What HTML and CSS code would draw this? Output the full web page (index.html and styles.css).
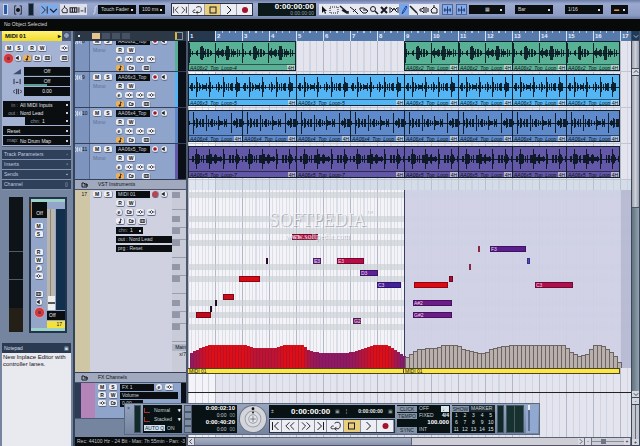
FILE: index.html
```html
<!DOCTYPE html>
<html lang="en">
<head>
    <meta charset="UTF-8">
    <meta name="viewport" content="width=device-width, initial-scale=1.0">
    <title>Project - MIDI 01</title>
    <link rel="stylesheet" href="styles.css">
</head>
<body>
    <!-- icon sprite -->
    <svg class="sprite" aria-hidden="true">
        <symbol id="i-start" viewBox="0 0 10 10"><path d="M2 1v8M8 1L4 5l4 4"/></symbol>
        <symbol id="i-end" viewBox="0 0 10 10"><path d="M8 1v8M2 1l4 4-4 4"/></symbol>
        <symbol id="i-rew" viewBox="0 0 12 10"><path d="M6 1L2 5l4 4M11 1L7 5l4 4"/></symbol>
        <symbol id="i-fwd" viewBox="0 0 12 10"><path d="M1 1l4 4-4 4M6 1l4 4-4 4"/></symbol>
        <symbol id="i-play" viewBox="0 0 10 10"><path d="M3 1l4 4-4 4"/></symbol>
        <symbol id="i-loop" viewBox="0 0 12 10"><path d="M4 8H2.500C0 8 1 5 3 5h1M5 2l2-1h2c3 0 3 6 0 7H5M7 6L5 8l2 2"/></symbol>
        <symbol id="i-stop" viewBox="0 0 10 10"><rect x="2" y="2" width="6" height="6"/></symbol>
        <symbol id="i-rec" viewBox="0 0 10 10"><circle cx="5" cy="5" r="3" fill="#a3132b" stroke="none"/></symbol>
        <symbol id="i-mon" viewBox="0 0 8 8"><path d="M1 3h1l3-2v6L2 5H1z" fill="#222" stroke="none"/></symbol>
        <symbol id="i-note" viewBox="0 0 8 8"><path d="M4 1v5M4 1l2 2"/><circle cx="3" cy="6" r="1" fill="#222"/></symbol>
        <symbol id="i-folder" viewBox="0 0 8 8"><path d="M1 6V2h2l1 1h2v3zM3 4h4"/></symbol>
        <symbol id="i-keys" viewBox="0 0 8 8"><path d="M1 2h6v4H1zM3 2v4M5 2v4"/></symbol>
        <symbol id="i-wave" viewBox="0 0 8 8"><path d="M0 4h2M6 4h2M4 2L2 4l2 2 2-2z"/></symbol>
        <symbol id="i-audio" viewBox="0 0 8 8"><path d="M0 1l2 3-2 3M3 1v6M5 2v4M7 1v6"/></symbol>
        <symbol id="i-fader" viewBox="0 0 10 8"><path d="M0 7h9V1z" fill="#3b4d70" stroke="none"/></symbol>
        <symbol id="i-pan" viewBox="0 0 10 8"><path d="M1 1v6M8 1v6M3 5h3"/></symbol>
        <symbol id="i-delay" viewBox="0 0 10 8"><path d="M2 2L0 4l2 2M8 2l2 2-2 2M4 1v6M6 1v6"/></symbol>
        <symbol id="i-bracket" viewBox="0 0 10 12"><path d="M3 1H1v10h2M7 1h2v10H7"/><circle cx="5" cy="6" r="2" fill="#111"/></symbol>
        <symbol id="i-arrow" viewBox="0 0 10 10"><path d="M3 1v7l2-2 1 3 1-1-1-2h2z" fill="#111" stroke="none"/></symbol>
        <symbol id="i-range" viewBox="0 0 10 10"><rect x="1" y="2" width="8" height="6" stroke-dasharray="1 1"/></symbol>
        <symbol id="i-split" viewBox="0 0 10 10"><path d="M1 1l7 6M3 5l5 3M7 8h2V6" stroke-width="1.500"/></symbol>
        <symbol id="i-glue" viewBox="0 0 10 10"><path d="M1 2l4 3 4 4M4 7l3-3"/></symbol>
        <symbol id="i-erase" viewBox="0 0 10 10"><path d="M1 3h4l4 3-2 2H4L1 5zM4 5h4"/></symbol>
        <symbol id="i-zoom" viewBox="0 0 10 10"><circle cx="4" cy="4" r="2.500"/><path d="M6 6l3 3" stroke-width="1.500"/></symbol>
        <symbol id="i-mute" viewBox="0 0 10 10"><path d="M2 2l6 6M8 2L2 8" stroke-width="2"/></symbol>
        <symbol id="i-warp" viewBox="0 0 10 10"><path d="M1 2v6M9 2v6M2 3l2 2 1-2 1 2 2-2M2 7l2-2M8 7L6 5" stroke-width="1"/></symbol>
        <symbol id="i-draw" viewBox="0 0 10 10"><path d="M3 9l1-3 3-5 1 1-3 5z" stroke="#1f4a9c"/></symbol>
        <symbol id="i-line" viewBox="0 0 10 10"><path d="M1 1l7 7M8 9h1" stroke-width="1.500"/></symbol>
        <symbol id="i-scrub" viewBox="0 0 10 10"><path d="M1 4h2l2-2v6L3 6H1zM7 2v6M9 3v4"/></symbol>
        <symbol id="i-color" viewBox="0 0 10 10"><path d="M2 5l3-3 3 2v4H3zM5 2V0"/></symbol>
        <symbol id="i-cross" viewBox="0 0 10 10"><path d="M1 5h8M5 1v8M2 3v4M8 3v4" stroke="#16306a"/></symbol>
        <symbol id="i-left" viewBox="0 0 8 8"><path d="M5 1L2 4l3 3"/></symbol>
        <symbol id="i-down" viewBox="0 0 8 8"><path d="M1 3l3 3 3-3"/></symbol>
        <symbol id="i-up" viewBox="0 0 8 8"><path d="M1 5l3-3 3 3"/></symbol>
    </svg>

    <div class="app">
        <header class="toolbar">
            <button class="tb-btn tb-narrow" aria-label="Project active"></button>
            <button class="tb-btn tb-plain" aria-label="Delay compensation"><svg><use href="#i-bracket"/></svg></button>
            <div class="slot"></div>
            <div class="group group-blue">
                <button aria-label="Show inspector"><svg><use href="#i-end"/></svg></button>
                <button aria-label="Show infoline"><svg><use href="#i-down"/></svg></button>
            </div>
            <div class="group group-light">
                <button aria-label="Pool"><svg><use href="#i-color"/></svg></button>
                <button aria-label="Mixer"><svg><use href="#i-keys"/></svg></button>
                <button aria-label="Markers"><svg><use href="#i-pan"/></svg></button>
            </div>
            <svg class="tb-curve"><path d="M1 9C5 9 1 1 5 1"/></svg>
            <select class="drop drop-fader" aria-label="Automation mode"><option>Touch Fader</option></select>
            <select class="drop drop-ms" aria-label="Return time"><option>100 ms</option></select>
            <div class="group group-play">
                <button class="half" aria-label="Previous"><svg><use href="#i-start"/></svg></button>
                <button class="half" aria-label="Next"><svg><use href="#i-end"/></svg></button>
                <button aria-label="Cycle"><svg><use href="#i-loop"/></svg></button>
                <button class="on" aria-label="Stop"><svg><use href="#i-stop"/></svg></button>
                <button aria-label="Play"><svg><use href="#i-play"/></svg></button>
                <button aria-label="Record"><svg><use href="#i-rec"/></svg></button>
            </div>
            <div class="clock">
                <strong>0:00:00:00</strong>
                <span>0:00:00:00</span>
            </div>
            <div class="group group-tools" id="tools"></div>
            <div class="group group-snap">
                <button aria-label="Autoscroll"><svg><use href="#i-cross"/></svg></button>
                <button aria-label="Snap"><svg><use href="#i-cross"/></svg></button>
            </div>
            <select class="drop drop-snap" aria-label="Snap mode"><option>▦</option></select>
            <select class="drop drop-grid" aria-label="Grid"><option>Bar</option></select>
            <select class="drop drop-quant" aria-label="Quantize"><option>1/16</option></select>
            <select class="drop drop-color" aria-label="Part colour"><option>▬</option></select>
        </header>

        <div class="infoline">No Object Selected</div>

        <main class="workspace">
            <aside class="inspector">
                <div class="insp-title">
                    <span class="insp-name">MIDI 01</span>
                    <button class="knob" aria-label="Inspector menu"></button>
                </div>
                <section class="insp-panel">
                    <div class="insp-buttons">
                        <button class="mini">M</button>
                        <button class="mini">S</button>
                        <button class="mini push">R</button>
                        <button class="mini">W</button>
                        <button class="mini push-end" aria-label="Input transformer"><svg><use href="#i-wave"/></svg></button>
                    </div>
                    <div class="insp-buttons tall">
                        <button class="record" aria-label="Record enable"></button>
                        <button class="mini round" aria-label="Monitor"><svg><use href="#i-mon"/></svg></button>
                        <button class="mini orange" aria-label="Timebase"><svg><use href="#i-note"/></svg></button>
                        <button class="mini" aria-label="Lanes"><svg><use href="#i-folder"/></svg></button>
                        <button class="mini" aria-label="Keys"><svg><use href="#i-keys"/></svg></button>
                        <button class="mini push-end" aria-label="Edit in place"><svg><use href="#i-keys"/></svg></button>
                    </div>
                    <div class="insp-value"><svg><use href="#i-fader"/></svg><output class="v1">Off</output></div>
                    <div class="insp-value"><svg><use href="#i-pan"/></svg><output class="v2">Off</output></div>
                    <div class="insp-value"><svg><use href="#i-delay"/></svg><output>0.00</output></div>
                    <div class="insp-routing">
                        <label class="field"><span>in :</span><select><option>All MIDI Inputs</option></select></label>
                        <label class="field"><span>out :</span><select><option>Nord Lead</option></select></label>
                        <label class="field field-short"><span>chn:</span><select><option>1</option></select></label>
                    </div>
                    <label class="field"><select aria-label="Program"><option>Reset</option></select></label>
                    <label class="field"><span>map:</span><select><option>No Drum Map</option></select></label>
                </section>
                <nav class="insp-tabs">
                    <button>Track Parameters<i>◦</i></button>
                    <button>Inserts<i>▫</i></button>
                    <button>Sends<i>▪</i></button>
                    <button>Channel<i>▯</i></button>
                </nav>
                <section class="channel">
                    <div class="eq"></div>
                    <div class="strip">
                        <div class="strip-cap"></div>
                        <div class="strip-body">
                            <div class="strip-left">
                                <span class="strip-pan">Off</span>
                                <button class="mini">M</button>
                                <button class="mini">S</button>
                                <button class="mini later">R</button>
                                <button class="mini">W</button>
                                <button class="mini round">e</button>
                                <button class="mini" aria-label="Bypass inserts"><svg><use href="#i-wave"/></svg></button>
                                <button class="mini later" aria-label="Keys"><svg><use href="#i-keys"/></svg></button>
                                <button class="mini round" aria-label="Monitor"><svg><use href="#i-mon"/></svg></button>
                                <button class="record" aria-label="Record enable"></button>
                            </div>
                            <div class="strip-right">
                                <div class="fader"><span class="fader-cap"></span></div>
                                <div class="meter"></div>
                                <span class="level">Off</span>
                                <span class="number">17</span>
                            </div>
                        </div>
                        <div class="strip-cap"></div>
                    </div>
                </section>
                <label class="note-head" for="notepad">Notepad<i>▣</i></label>
                <textarea id="notepad" class="notepad">New Inplace Editor with controller lanes.</textarea>
            </aside>

            <section class="tracklist">
                <div class="list-head">
                    <span class="dot"></span>
                    <i class="chip lit"></i><i class="chip"></i><i class="chip"></i><i class="chip"></i>
                    <b></b>
                </div>
                <div id="audioTracks"></div>
                <div class="folder"><svg><use href="#i-folder"/></svg>VST Instruments</div>
                <div class="midi-track">
                    <div class="midi-num">17</div>
                    <div class="midi-body">
                        <div class="line">
                            <button class="mini">M</button>
                            <button class="mini">S</button>
                            <span class="name">MIDI 01</span>
                            <button class="mini round armed" aria-label="Record enable"></button>
                            <button class="mini round" aria-label="Monitor"><svg><use href="#i-mon"/></svg></button>
                        </div>
                        <div class="line inset">
                            <button class="mini">R</button>
                            <button class="mini">W</button>
                        </div>
                        <div class="line inset">
                            <button class="mini round">e</button>
                            <button class="mini" aria-label="Inserts"><svg><use href="#i-folder"/></svg></button>
                            <button class="mini" aria-label="Sends"><svg><use href="#i-wave"/></svg></button>
                            <button class="mini" aria-label="EQ"><svg><use href="#i-wave"/></svg></button>
                        </div>
                        <div class="line inset">
                            <button class="mini" aria-label="Timebase"><svg><use href="#i-note"/></svg></button>
                            <button class="mini" aria-label="Lanes"><svg><use href="#i-folder"/></svg></button>
                            <button class="mini" aria-label="Drums"><svg><use href="#i-keys"/></svg></button>
                        </div>
                        <label class="field inset chn"><span>chn:</span><select><option>1</option></select></label>
                        <div class="name inset wide">out : Nord Lead</div>
                        <div class="name inset wide">prg : Reset</div>
                    </div>
                    <div class="keys">
                        <div class="key-rows" id="keyRows"></div>
                        <span class="ctl">Main</span>
                        <span class="ctl">x/7</span>
                    </div>
                </div>
                <div class="folder"><svg><use href="#i-folder"/></svg>FX Channels</div>
                <div class="fx-track">
                    <div class="fx-num"></div>
                    <div class="fx-body">
                        <div class="line">
                            <button class="mini">M</button>
                            <button class="mini">S</button>
                            <span class="name">FX 1</span>
                            <button class="mini round">e</button>
                            <button class="mini" aria-label="Inserts"><svg><use href="#i-wave"/></svg></button>
                        </div>
                        <div class="line">
                            <button class="mini">R</button>
                            <button class="mini">W</button>
                            <span class="name grow">Volume</span>
                        </div>
                        <div class="line">
                            <button class="mini" aria-label="Mute automation"><svg><use href="#i-wave"/></svg></button>
                            <button class="mini" aria-label="Lanes"><svg><use href="#i-folder"/></svg></button>
                            <span class="name short">0.00</span>
                        </div>
                    </div>
                    <div class="peak"></div>
                </div>
                <div class="list-rest"></div>
                <div class="status">Rec: 44100 Hz - 24 Bit - Max: 7h 55min - Pan: -3</div>
            </section>

            <section class="arrange">
                <div class="ruler" id="ruler"></div>
                <div class="canvas">
                    <div id="lanes"></div>
                    <div class="gap"></div>
                    <div class="roll">
                        <div class="roll-rows" id="rollRows"></div>
                        <div class="shade"></div>
                        <div id="notes"></div>
                        <svg class="ramp" id="ramp" viewBox="0 0 443 24" preserveAspectRatio="xMinYMax slice"></svg>
                        <div class="watermark">
                            <span class="wm-name">SOFTPEDIA<sup>™</sup></span>
                            <span class="wm-url">www.softpedia.com</span>
                        </div>
                    </div>
                    <div class="part-names"><span>MIDI 01</span><span>MIDI 01</span></div>
                    <div class="below"></div>
                </div>
                <div class="hscroll">
                    <button aria-label="Scroll left"><svg><use href="#i-left"/></svg></button>
                    <div class="thumb"></div>
                    <div class="track-bg"></div>
                    <button aria-label="Scroll right"><svg><use href="#i-play"/></svg></button>
                    <button aria-label="Zoom out">-</button>
                    <input type="range" value="35" aria-label="Horizontal zoom">
                    <button aria-label="Zoom in">+</button>
                </div>
            </section>

            <div class="vscroll">
                <button class="corner" aria-label="Ruler format"><svg><use href="#i-down"/></svg></button>
                <div class="v-light v-top"></div>
                <button aria-label="Scroll up"><svg><use href="#i-up"/></svg></button>
                <div class="v-light v-thumb"></div>
                <div class="v-track"></div>
                <button aria-label="Scroll down"><svg><use href="#i-down"/></svg></button>
                <button aria-label="Zoom out">-</button>
                <div class="v-zoom"></div>
                <button aria-label="Zoom in">+</button>
            </div>

            <section class="transport" aria-label="Transport">
                <div class="tp-handle">×</div>
                <div class="tp-meter"></div>
                <div class="tp-modes">
                    <div><i></i>Normal<b>▾</b></div>
                    <div><i></i>Stacked<b>▾</b></div>
                    <div><button class="autoq">AUTO Q</button>ON</div>
                </div>
                <div class="tp-locators">
                    <div><i></i><strong>0:00:02:10</strong></div>
                    <div><i></i><span>0:00</span><em>00</em></div>
                    <div><i></i><strong>0:00:40:20</strong></div>
                    <div><i></i><span>0:00</span><em>00</em></div>
                </div>
                <svg class="jog" viewBox="0 0 30 30">
                    <circle cx="15" cy="15" r="15" fill="#6c7385"/>
                    <circle cx="15" cy="15" r="14" fill="#d3d5da"/>
                    <circle cx="15" cy="15" r="9" fill="#9a9fab"/>
                    <circle cx="15" cy="15" r="8" fill="#dcdde1"/>
                    <circle cx="15" cy="15" r="5" fill="#9297a4"/>
                    <circle cx="15" cy="15" r="4" fill="#e6e7ea"/>
                    <path d="M15 12v6M12 15h6" stroke="#70757f"/>
                    <circle cx="15" cy="4" r="1.500" fill="#111"/>
                    <circle cx="15" cy="8" r="1" fill="#111"/>
                </svg>
                <div class="tp-main">
                    <div class="tp-display">
                        <span class="pm">±</span>
                        <strong>0:00:00:00</strong><em>▣</em>
                        <span class="pm">¦</span>
                        <small>0:00:00:00</small><em>▣</em>
                    </div>
                    <div class="group tp-buttons">
                        <button class="half" aria-label="Go to start"><svg><use href="#i-start"/></svg></button>
                        <button aria-label="Rewind"><svg><use href="#i-rew"/></svg></button>
                        <button aria-label="Forward"><svg><use href="#i-fwd"/></svg></button>
                        <button class="half" aria-label="Go to end"><svg><use href="#i-end"/></svg></button>
                        <button aria-label="Cycle"><svg><use href="#i-loop"/></svg></button>
                        <button class="on" aria-label="Stop"><svg><use href="#i-stop"/></svg></button>
                        <button aria-label="Play"><svg><use href="#i-play"/></svg></button>
                        <button aria-label="Record"><svg><use href="#i-rec"/></svg></button>
                    </div>
                </div>
                <div class="tp-tempo">
                    <div><button>CLICK</button>OFF<em class="box">♩</em></div>
                    <div><button>TEMPO</button>FIXED<b>4/4</b></div>
                    <div><b class="bpm">100.000</b></div>
                    <div><button>SYNC</button>INT</div>
                </div>
                <div class="tp-markers">
                    <div class="mk-head"><button>SHOW</button>MARKER</div>
                    <div class="mk-grid" id="markers"></div>
                </div>
                <div class="tp-meter"></div>
                <div class="tp-meter wide"></div>
                <div class="tp-out"><span></span></div>
            </section>
        </main>
    </div>

    <script src="script.js"></script>
</body>
</html>
```

FILE: styles.css
```css
* {
    margin: 0;
    padding: 0;
    box-sizing: border-box;
}

:root {
    --bar: 27px;
    --track: 36px;
    --midi: 183px;
    --blue: #8fa4cb;
    --slate: #75849f;
    --lcd: #0b0e10;
}

body {
    font-family: "Liberation Sans", Arial, sans-serif;
    font-size: 5px;
    line-height: 7px;
    background: #75849f;
    color: #111;
    overflow: hidden;
}

button,
select,
input,
textarea {
    font: inherit;
    color: inherit;
    border: none;
    border-radius: 0;
    background: none;
    appearance: none;
}

i,
em {
    font-style: normal;
}

svg {
    fill: none;
    stroke: #1a1a22;
    stroke-width: 1;
    display: block;
}

.sprite {
    position: absolute;
    width: 0;
    height: 0;
}

.app {
    display: grid;
    grid-template-rows: 19px 12px minmax(0, 1fr);
    height: 100vh;
}

/* toolbar */
.toolbar {
    display: flex;
    align-items: center;
    padding: 0 3px;
    background: linear-gradient(#6c7ca6, #9ba9cf 20%, #8c9bc3 80%, #6b7a9f);
    overflow: hidden;
}

.toolbar > * {
    flex: none;
}

.toolbar svg {
    width: 10px;
    height: 10px;
}

.tb-btn {
    height: 11px;
}

.tb-narrow {
    width: 5px;
    background: #2b5ba2;
    border: 1px solid #c6d3ec;
}

.tb-plain {
    margin-left: 5px;
    width: 10px;
}

.slot {
    width: 6px;
    height: 13px;
    margin: 0 6px 0 5px;
    background: #13222e;
    border: 1px solid #54658a;
}

.group {
    display: flex;
}

.group button {
    display: flex;
    align-items: center;
    justify-content: center;
    height: 11px;
}

.group-blue {
    background: #7fabea;
}

.group-blue button {
    width: 9px;
}

.group-light {
    margin: 0 5px 0 2px;
    background: #dde0ea;
}

.group-light button {
    width: 9px;
}

.toolbar .tb-curve {
    width: 6px;
    stroke: #d9e0f2;
}

.drop {
    height: 9px;
    padding: 0 3px;
    background: linear-gradient(#dcdde0, #dcdde0) right 3px center / 2px 2px no-repeat var(--lcd);
    color: #d5d8dc;
}

.drop-fader {
    width: 38px;
}

.drop-ms {
    width: 26px;
    margin: 0 6px 0 3px;
}

.drop-snap {
    width: 36px;
    margin: 0 10px 0 2px;
    text-align: center;
}

.drop-grid,
.drop-quant {
    width: 38px;
    margin-right: 12px;
}

.drop-quant {
    margin-right: 8px;
}

.drop-color {
    width: 17px;
    color: #e39a4d;
}

.group-play {
    border: 1px solid #2b3040;
    background: #eceef3;
}

.group-play button {
    width: 16px;
    border-left: 1px solid #9aa0b0;
}

.group-play .half {
    width: 8px;
    border: none;
}

.group .on {
    background: #e9cf7c;
}

.clock {
    display: flex;
    flex-direction: column;
    align-items: flex-end;
    width: 58px;
    height: 13px;
    margin: 0 3px 0 5px;
    padding-right: 2px;
    background: #0b1719;
    color: #fff;
}

.clock strong {
    font-size: 8px;
    line-height: 8px;
}

.clock span {
    line-height: 5px;
    color: #8fa2a6;
}

.group-tools {
    background: #e8eaf1;
}

.group-tools button {
    width: 10px;
}

.group-tools .active {
    background: #78a6ea;
}

.group-snap {
    gap: 3px;
    margin-left: 3px;
}

.group-snap button {
    width: 11px;
    background: #86acea;
    border: 1px solid #4a679f;
}

.infoline {
    padding: 0 4px;
    line-height: 11px;
    background: #080909;
    color: #d8d8d8;
}

.workspace {
    position: relative;
    display: grid;
    grid-template-columns: 75px 111px minmax(0, 1fr) 9px;
    min-height: 0;
}

/* shared small controls */
.mini {
    display: flex;
    align-items: center;
    justify-content: center;
    flex: none;
    width: 9px;
    height: 7px;
    border-radius: 2px;
    background: #eceef3;
    border-bottom: 1px solid #5d6a86;
    border-right: 1px solid #8190ae;
    font-weight: bold;
    line-height: 6px;
}

.mini svg {
    width: 7px;
    height: 6px;
}

.round {
    width: 7px;
    border-radius: 4px;
}

.orange {
    background: #eeb053;
}

.armed {
    background: #b8454f;
}

.name {
    display: block;
    width: 34px;
    height: 7px;
    padding-left: 2px;
    background: var(--lcd);
    color: #c9d2dc;
    white-space: nowrap;
    overflow: hidden;
}

.field {
    display: flex;
    height: 8px;
    line-height: 8px;
    padding: 0 2px 0 4px;
    background: linear-gradient(#ccd, #ccd) right 2px center / 2px 2px no-repeat var(--lcd);
    color: #8d98a6;
}

.field span {
    flex: none;
    width: 11px;
    text-align: right;
    margin-right: 2px;
}

.field select {
    flex: 1;
    min-width: 0;
    color: #e2e5ea;
}

/* inspector */
.inspector {
    display: flex;
    flex-direction: column;
    min-height: 0;
    padding: 0 2px 0 2px;
    border-right: 2px solid #35435b;
    background: var(--slate);
}

.insp-title {
    display: flex;
    justify-content: space-between;
    flex: none;
    height: 10px;
    background: #4c5c78;
}

.insp-name {
    width: 61px;
    padding-left: 3px;
    line-height: 10px;
    font-size: 6px;
    font-weight: bold;
    background: linear-gradient(#fff27a, #f2dc28);
}

.insp-name::after {
    content: "▸";
    float: right;
    margin-right: 1px;
}

.knob {
    width: 7px;
    height: 7px;
    margin: 1px;
    border-radius: 4px;
    background: #91a1bb;
    border: 1px solid #35435b;
}

.insp-panel {
    padding: 4px 1px 0;
    background: #a4b3d3;
    border-bottom: 1px solid #4c5c78;
}

.insp-buttons {
    display: flex;
    align-items: center;
    gap: 1px;
    padding: 0 1px 1px 2px;
}

.insp-buttons.tall {
    height: 12px;
    padding-left: 0;
    margin-bottom: 2px;
}

.insp-buttons .push {
    margin-left: 3px;
}

.insp-buttons .push-end {
    margin-left: auto;
}

.record {
    flex: none;
    width: 11px;
    height: 11px;
    border-radius: 6px;
    background: radial-gradient(#75303a 20%, #d93b3f 30%, #c62f38);
    border: 1px solid #dc9aa6;
}

.insp-value {
    display: flex;
    justify-content: space-between;
    align-items: center;
    height: 9px;
    margin-bottom: 1px;
    padding-left: 10px;
}

.insp-value svg {
    width: 9px;
    height: 7px;
}

.insp-value output {
    width: 46px;
    height: 9px;
    line-height: 8px;
    text-align: center;
    background: var(--lcd);
    color: #e2e5ea;
}

.insp-value .v1 {
    border-bottom: 1px solid #16242a;
}

.insp-value .v2 {
    background: linear-gradient(#5b9b96, #5b9b96) left bottom / 50% 2px no-repeat var(--lcd);
}

.insp-routing {
    margin: 5px 0 1px;
}

.field-short {
    margin-left: 22px;
}

.insp-panel > .field {
    margin-bottom: 1px;
    height: 9px;
}

.insp-tabs {
    margin-top: 3px;
}

.insp-tabs button {
    display: flex;
    justify-content: space-between;
    align-items: center;
    width: 100%;
    height: 10px;
    padding: 0 3px 0 2px;
    background: #2f405a;
    border-bottom: 1px solid #8493ad;
    color: #c0cce0;
}

.channel {
    display: flex;
    flex: none;
    gap: 6px;
    padding: 7px 0 9px 7px;
    height: 153px;
}

.eq {
    width: 14px;
    height: 135px;
    background:
        linear-gradient(#4c5c68, #4c5c68) 0 54px / 100% 1px no-repeat,
        linear-gradient(#4c5c68, #4c5c68) 0 82px / 100% 1px no-repeat,
        #0d1316;
    border-bottom: 24px solid #241f17;
}

.strip {
    display: flex;
    flex-direction: column;
    width: 38px;
    height: 136px;
    padding: 2px;
    background: #22344b;
}

.strip-cap {
    height: 3px;
    background: #9cd3c6;
}

.strip-body {
    flex: 1;
    display: flex;
    background: #93a5c8;
}

.strip-left {
    display: flex;
    flex-direction: column;
    align-items: center;
    gap: 1px;
    width: 16px;
}

.strip-pan {
    width: 16px;
    height: 16px;
    margin-bottom: 4px;
    padding-top: 8px;
    text-align: center;
    background: var(--lcd);
    border-left: 1px solid #d88c3a;
    color: #eee;
}

.strip-left .later {
    margin-top: 10px;
}

.strip-right {
    flex: 1;
    display: grid;
    grid-template: 1fr 9px 7px / 1fr 9px;
    gap: 1px;
    padding-top: 7px;
}

.fader {
    display: flex;
    align-items: flex-end;
    justify-content: center;
    background: linear-gradient(90deg, #bab6ab 40%, #8b887f 40%, #8b887f 55%, #bab6ab 55%);
}

.fader-cap {
    width: 7px;
    height: 14px;
    background: linear-gradient(#eee 45%, #555 45%, #555 55%, #eee 55%);
}

.meter {
    background: #12304e;
}

.level {
    grid-column: 1 / 3;
    padding: 1px 2px;
    background: var(--lcd);
    color: #eee;
}

.number {
    grid-column: 1 / 3;
    padding-right: 3px;
    text-align: right;
    background: #f4e13e;
}

.note-head {
    display: flex;
    justify-content: space-between;
    flex: none;
    height: 10px;
    line-height: 10px;
    padding: 0 2px;
    background: #2a3a50;
    color: #d5dde8;
}

.notepad {
    flex: 1;
    width: 100%;
    min-height: 0;
    padding: 1px;
    font-size: 6px;
    line-height: 7px;
    background: #e9e9f0;
    resize: none;
}

/* track list */
.tracklist {
    display: flex;
    flex-direction: column;
    min-height: 0;
    overflow: hidden;
    background: var(--slate);
}

.list-head {
    display: flex;
    align-items: center;
    flex: none;
    gap: 2px;
    height: 10px;
    padding: 0 3px;
    background: #2c3846;
}

.dot {
    width: 2px;
    height: 2px;
    margin-right: 10px;
    background: #dde;
}

.chip {
    width: 8px;
    height: 6px;
    background: #465263;
}

.chip.lit {
    background: #e6c38d;
}

.list-head b {
    width: 8px;
    height: 8px;
    margin-left: auto;
    border: 1px solid #8492a8;
    border-left: 2px solid #d8b83c;
}

.track {
    display: grid;
    grid-template-columns: 15px minmax(0, 1fr) 3px 8px;
    height: var(--track);
    overflow: hidden;
    background: var(--blue);
    border-bottom: 1px solid #33415c;
}

/* the top track is scrolled partly out of view */
.track.cut {
    height: 31px;
}

.track.cut > * {
    height: 35px;
    margin-top: -5px;
}

.track-num {
    padding-top: 2px;
    background: #7c94be;
    border-right: 1px solid #5a6d92;
    white-space: nowrap;
}

.track-num svg {
    float: left;
    width: 7px;
    height: 7px;
    stroke: #dfe7f5;
}

.track-body {
    display: flex;
    flex-direction: column;
    gap: 2px;
    padding: 2px 0 0 3px;
}

.line {
    display: flex;
    gap: 2px;
    height: 7px;
}

.line .name {
    flex: none;
}

.track-body .line:first-child .mini + .name,
.midi-body .line:first-child .mini + .name {
    margin-left: 1px;
}

.kind {
    width: 21px;
    color: #5d6f92;
}

.inset {
    margin-left: 23px;
}

.track-body .gap-left {
    margin-left: 4px;
}

.peak {
    background: #0a0f18;
}

.folder {
    display: flex;
    align-items: center;
    flex: none;
    gap: 8px;
    height: 10px;
    padding-left: 5px;
    background: #a0a9bd;
    border-bottom: 1px solid #49566e;
}

.folder svg {
    width: 10px;
    height: 8px;
}

.midi-track {
    display: grid;
    grid-template-columns: 15px minmax(0, 1fr) 14px;
    flex: none;
    height: var(--midi);
    border-bottom: 1px solid #33415c;
}

.midi-num {
    padding: 1px 3px 0 0;
    text-align: right;
    background: #cfc6a6;
}

.midi-body {
    display: flex;
    flex-direction: column;
    gap: 2px;
    padding: 1px 0 0 3px;
    background: #d0d1e0;
}

.midi-body .name.wide {
    width: auto;
}

.midi-body .chn {
    width: 27px;
    height: 7px;
    line-height: 7px;
    padding-left: 2px;
}

.chn span {
    width: 10px;
}

.keys {
    background: #c9cbd8;
}

.key-rows {
    padding-top: 2px;
    height: 154px;
    overflow: hidden;
}

.key {
    width: 14px;
    height: 6px;
}

.key.black {
    width: 8px;
    background: #9298a8;
}

.key.edge {
    border-bottom: 1px solid #9a9fb0;
}

.ctl {
    display: block;
    height: 7px;
    text-align: right;
}

.ctl:nth-child(2) {
    background: #aeb5c6;
}

.fx-track {
    display: grid;
    grid-template-columns: 20px minmax(0, 1fr) 5px;
    flex: none;
    height: 36px;
    background: var(--blue);
    border-bottom: 1px solid #4c5c78;
}

.fx-num {
    background: linear-gradient(90deg, #2d3b57 6px, #b484b8 6px);
}

.fx-body {
    display: flex;
    flex-direction: column;
    gap: 1px;
    padding: 1px 1px 0 3px;
    overflow: hidden;
}

.fx-body .grow {
    width: 58px;
}

.fx-body .short {
    width: 23px;
}

.list-rest {
    flex: 1;
    min-height: 0;
}

.status {
    flex: none;
    height: 9px;
    padding-left: 2px;
    line-height: 9px;
    background: #0a0b0d;
    color: #bfc4ca;
    white-space: nowrap;
    overflow: hidden;
}

/* arrange window */
.arrange {
    display: flex;
    flex-direction: column;
    min-width: 0;
    min-height: 0;
    border-left: 2px solid #4b586c;
}

.ruler {
    display: grid;
    grid-template-columns: repeat(17, var(--bar));
    flex: none;
    height: 10px;
    overflow: hidden;
    background:
        repeating-linear-gradient(90deg, #b9cbe4 0 1px, transparent 1px calc(var(--bar) / 4)) 0 0 / 100% 2px no-repeat,
        #567aab;
    color: #e9f0fa;
    font-size: 6px;
    font-weight: bold;
    line-height: 11px;
}

.ruler span {
    border-left: 1px solid #d5e0f0;
    padding-left: 1px;
}

.ruler span:first-child {
    background: #26384e;
}

.canvas {
    display: flex;
    flex-direction: column;
    flex: 1;
    min-height: 0;
    overflow: hidden;
    background:
        repeating-linear-gradient(90deg, #b3b8c6 0 1px, transparent 1px var(--bar)),
        repeating-linear-gradient(90deg, #d1d5df 0 1px, transparent 1px calc(var(--bar) / 4)),
        linear-gradient(90deg, #f4f4f8 var(--bar), #e3e4ed var(--bar));
}

.lane {
    display: grid;
    grid-template-columns: repeat(16, var(--bar));
    height: var(--track);
    padding: 2px 0 1px;
    border-bottom: 1px solid #c3c6d2;
}

.lane.cut {
    height: 31px;
    padding: 0;
}

.clip {
    display: flex;
    flex-direction: column;
    min-width: 0;
    border: 1px solid #10202c;
    border-right-width: 0;
    overflow: hidden;
}

.clip.last {
    border-right-width: 1px;
}

.clip svg {
    flex: 1;
    width: 100%;
    min-height: 0;
    stroke: #0a1620;
    shape-rendering: crispEdges;
}

.clip-name {
    display: flex;
    height: 6px;
    padding-left: 1px;
    line-height: 6px;
    border-top: 1px solid rgba(0, 0, 0, 0.5);
    font-style: italic;
    white-space: nowrap;
}

.clip-name span {
    flex: 1;
    min-width: 0;
}

.clip-name em {
    flex: none;
    width: 8px;
    text-align: center;
    background: rgba(235, 238, 245, 0.6);
}

.green { background: #58b095; }
.sky { background: #53b5f3; }
.steel { background: #5e8acb; }
.violet { background: #6358a8; }

.gap {
    flex: none;
    height: 10px;
    background: rgba(190, 208, 222, 0.4);
}

.roll {
    position: relative;
    flex: none;
    height: 178px;
    overflow: hidden;
    background: repeating-linear-gradient(90deg, #b3b8c6 0 1px, transparent 1px var(--bar)),
        repeating-linear-gradient(90deg, #dcdee8 0 1px, #f3f3f8 1px calc(var(--bar) / 8));
}

.roll-rows {
    padding-top: 2px;
}

.roll-row {
    height: 6px;
}

.roll-row.black {
    background: rgba(200, 206, 212, 0.6);
}

.shade {
    position: absolute;
    left: calc(var(--bar) * 8);
    right: 0;
    top: 0;
    bottom: 0;
    background: linear-gradient(90deg, transparent calc(var(--bar) * 8), rgba(150, 155, 185, 0.4) 0), rgba(207, 208, 229, 0.95);
    border-left: 1px solid #383c60;
}

.note {
    position: absolute;
    height: 6px;
    padding-left: 1px;
    box-shadow: inset 0 0 0 1px rgba(20, 0, 30, 0.4);
    color: #f0d4e8;
    line-height: 6px;
}

.ramp {
    position: absolute;
    left: 0;
    bottom: 0;
    width: 443px;
    height: 24px;
}

.watermark {
    position: absolute;
    left: 81px;
    top: 18px;
    display: flex;
    flex-direction: column;
    align-items: center;
    font-family: "Liberation Serif", serif;
    color: rgba(244, 244, 247, 0.9);
    text-shadow: 1px 1px 0 rgba(140, 140, 150, 0.6);
}

.wm-name {
    font-size: 18px;
    line-height: 24px;
}

.wm-name sup {
    margin-right: -6px;
    font-size: 6px;
    vertical-align: top;
    line-height: 8px;
}

.wm-url {
    font-size: 8px;
    line-height: 10px;
}

.part-names {
    display: grid;
    grid-template-columns: repeat(2, calc(var(--bar) * 8));
    flex: none;
    height: 6px;
}

.part-names span {
    padding-left: 1px;
    line-height: 4px;
    background: #fbe64a;
    border: 1px solid #4a4420;
    border-left-width: 0;
}

.below {
    flex: none;
    height: 19px;
    border-bottom: 1px solid #222;
}

.hscroll {
    display: flex;
    flex: none;
    height: 9px;
    background: #cdced6;
    border-top: 1px solid #5b6272;
    border-bottom: 1px solid #54506a;
}

.hscroll button {
    display: flex;
    align-items: center;
    justify-content: center;
    width: 7px;
    background: #dadbe2;
    border-right: 1px solid #6b7180;
}

.hscroll button svg {
    width: 7px;
    height: 7px;
}

.thumb {
    width: 49%;
    background: linear-gradient(#a7b1c4, #8794aa);
    border-right: 1px solid #5b6272;
}

.track-bg {
    flex: 1;
}

.hscroll input {
    width: 32px;
    background: linear-gradient(#888d9a, #888d9a) center / 100% 1px no-repeat;
}

.hscroll input::-webkit-slider-thumb {
    appearance: none;
    width: 5px;
    height: 5px;
    background: #6f7787;
}

.vscroll {
    display: flex;
    flex-direction: column;
    min-height: 0;
    padding: 0 1px;
    background: #3d4859;
}

.vscroll button {
    display: flex;
    align-items: center;
    justify-content: center;
    flex: none;
    height: 7px;
    background: #d5d7de;
    border-bottom: 1px solid #3d4859;
}

.vscroll button svg {
    width: 6px;
    height: 6px;
}

.vscroll .corner {
    height: 10px;
    background: #1c3a5a;
}

.corner svg {
    stroke: #cfe0f2;
}

.v-light {
    background: linear-gradient(90deg, #9da1ae, #cdd0d8 50%, #9da1ae);
    border-bottom: 1px solid #4b5465;
}

.v-top {
    height: 28px;
}

.v-thumb {
    height: 132px;
}

.v-track {
    flex: 1;
    background: linear-gradient(90deg, #62737f, #91a3ae);
}

.v-zoom {
    height: 34px;
    background: linear-gradient(90deg, #c2c5ce 45%, #666d7a 45%, #666d7a 55%, #c2c5ce 55%);
}

/* floating transport panel */
.transport {
    position: absolute;
    left: 124px;
    bottom: 11px;
    display: flex;
    gap: 2px;
    height: 32px;
    padding: 1px 1px 1px 0;
    background: linear-gradient(#97a5bd, #7484a0);
    border: 1px solid #5b6a84;
    color: #c4cfd4;
}

.transport > * {
    flex: none;
}

.transport em {
    color: #8fa0a5;
}

.tp-handle {
    width: 7px;
    padding-left: 2px;
    color: #30405c;
}

.tp-meter {
    width: 7px;
    background: #12292a;
    border: 1px solid #45586a;
}

.tp-meter.wide {
    width: 18px;
    background: linear-gradient(90deg, #16312f 7px, #4a5e60 7px, #4a5e60 8px, #16312f 8px);
}

.tp-modes {
    display: flex;
    flex-direction: column;
    justify-content: space-between;
    width: 39px;
    padding: 1px;
    background: #081113;
}

.tp-modes div {
    display: flex;
    align-items: center;
    gap: 2px;
    height: 8px;
}

.tp-modes i {
    width: 6px;
    height: 5px;
    margin-right: 2px;
    border: 1px solid #a5352f;
    border-width: 0 0 1px 1px;
}

.tp-modes b {
    margin-left: auto;
    color: #fff;
}

.autoq {
    height: 6px;
    padding: 0 1px;
    line-height: 6px;
    background: #cfe0ee;
    color: #123;
}

.tp-locators {
    display: grid;
    grid-template-rows: repeat(4, 1fr);
    width: 53px;
    background: #081113;
}

.tp-locators div {
    display: flex;
    align-items: center;
    justify-content: flex-end;
    gap: 3px;
    padding-right: 2px;
}

.tp-locators i {
    width: 8px;
    height: 100%;
    margin-right: auto;
    background: #7f8da3;
    border: 1px solid #4b586e;
}

.tp-locators strong {
    font-size: 6px;
    color: #fff;
}

.jog {
    width: 28px;
    height: 28px;
    stroke: none;
}

.tp-main {
    display: flex;
    flex-direction: column;
    justify-content: space-between;
    width: 126px;
}

.tp-display {
    display: flex;
    align-items: center;
    justify-content: space-between;
    height: 13px;
    padding: 0 2px;
    background: #081113;
}

.tp-display strong {
    margin-left: 12px;
    font-size: 8px;
    color: #fff;
}

.tp-display small {
    margin-left: 6px;
    font-size: 5px;
    font-weight: bold;
    color: #e6ecee;
}

.tp-buttons {
    border: 1px solid #2b3040;
    background: #eceef3;
}

.tp-buttons button {
    flex: 16;
    height: 12px;
    border-right: 1px solid #8b90a0;
}

.tp-buttons .half {
    flex: 10;
}

.tp-buttons svg {
    width: 11px;
    height: 10px;
}

.tp-tempo {
    display: grid;
    grid-template-rows: repeat(4, 7px);
    width: 53px;
    background: #081113;
}

.tp-tempo div {
    display: flex;
    align-items: center;
    gap: 2px;
    padding-right: 1px;
}

.tp-tempo button,
.mk-head button {
    width: 20px;
    height: 6px;
    line-height: 6px;
    background: #8593a9;
    color: #122;
}

.mk-head button {
    width: 17px;
}

.tp-tempo b {
    margin-left: auto;
    color: #fff;
}

.tp-tempo .bpm {
    font-size: 6px;
}

.transport .box {
    margin-left: auto;
    width: 8px;
    height: 6px;
    line-height: 6px;
    text-align: center;
    background: #dbe6ee;
    color: #123;
}

.tp-markers {
    width: 43px;
    background: #081113;
}

.mk-head {
    display: flex;
    align-items: center;
    gap: 2px;
    height: 7px;
    background: #1c2a30;
}

.mk-grid {
    display: grid;
    grid-template-columns: repeat(5, 1fr);
    text-align: center;
    color: #dfe6ea;
}

.tp-out {
    width: 12px;
    padding-left: 2px;
    background: #91a8d0;
}

.tp-out span {
    display: block;
    width: 2px;
    height: 26px;
    background: linear-gradient(#e9edf4 5px, #5a6d92 5px);
}
```

FILE: script.js
```js
// audio tracks: colour class, number, name, wave seed, clips as [start bar, length]
const tracks = [
    { color: 'green', num: '8', name: 'AA06x2_Top_Loop', take: 4, seed: 3, clips: [[0, 4], [8, 2], [10, 2], [12, 2], [14, 2]] },
    { color: 'sky', num: '9', name: 'AA06x3_Top_Loop', take: 5, seed: 7, clips: [[0, 4], [4, 4], [8, 2], [10, 2], [12, 2], [14, 2]] },
    { color: 'steel', num: '10', name: 'AA06x4_Top_Loop', take: 6, seed: 11, clips: [[0, 2], [2, 2], [4, 2], [6, 2], [8, 2], [10, 2], [12, 2], [14, 2]] },
    { color: 'violet', num: '11', name: 'AA06x5_Top_Loop', take: 7, seed: 19, clips: [[0, 4], [4, 4], [8, 2], [10, 2], [12, 2], [14, 2]] }
];

const icon = (id) => `<svg><use href="#i-${id}"/></svg>`;
const mini = (label, content, cls = '') => `<button class="mini ${cls}" aria-label="${label}">${content}</button>`;

// vertical strokes around the centre line, looped every two bars
function wavePath(track, bars) {
    let s = track.seed;
    let d = `M0 13.5H${bars * 27}`;
    const loop = [];
    for (let i = 0; i < 54; i++) {
        s = (s * 1103515 + 12345) % 65521;
        const r = s / 65521;
        let amp = r < 0.4 ? 0 : 1 + r * r * 5;
        const beat = i % 27;
        if (track.color === 'green') {
            if (beat === 0) amp = 12;
            if (beat >= 11 && beat <= 13) amp = 7 + r * 3;
        } else if (track.color === 'steel') {
            if (i % 13 === 4) amp = 7 + r * 5;
        } else if (beat === 7 || beat === 20) {
            amp = 11;
        } else if (beat === 8 || beat === 21) {
            amp = 6;
        }
        loop.push(Math.round(amp));
    }
    for (let x = 0; x < bars * 27; x++) {
        const a = loop[x % 54];
        if (a) d += `M${x + 0.5} ${13.5 - a}v${a * 2}`;
    }
    return d;
}

document.getElementById('audioTracks').innerHTML = tracks.map((t, i) => `
    <div class="track ${i === 0 ? 'cut' : ''}">
        <div class="track-num">${icon('audio')}${t.num}</div>
        <div class="track-body">
            <div class="line">
                ${mini('Mute', 'M')}${mini('Solo', 'S')}
                <span class="name">${t.name.slice(0, 10)}</span>
                ${mini('Record enable', icon('rec'), 'round')}${mini('Monitor', icon('mon'), 'round')}
            </div>
            <div class="line"><span class="kind">Mono</span>${mini('Read', 'R')}${mini('Write', 'W')}</div>
            <div class="line inset">${mini('Edit', 'e', 'round')}${mini('Inserts', icon('wave'))}${mini('EQ', icon('wave'))}${mini('Sends', icon('wave'))}</div>
            <div class="line inset">${mini('Timebase', icon('note'), 'orange')}${mini('Lanes', icon('folder'))}${mini('Freeze', icon('keys'), 'gap-left')}</div>
        </div>
        <div class="${t.color}"></div>
        <div class="peak"></div>
    </div>`).join('');

document.getElementById('lanes').innerHTML = tracks.map((t, i) => `
    <div class="lane ${i === 0 ? 'cut' : ''}">
        ${t.clips.map(([start, len], n) => {
            const next = t.clips[n + 1];
            const last = !next || next[0] !== start + len;
            return `<div class="clip ${t.color} ${last ? 'last' : ''}" style="grid-column: ${start + 1} / span ${len}">
                <svg viewBox="0 0 ${len * 27} 27" preserveAspectRatio="none"><path d="${wavePath(t, len)}"/></svg>
                <div class="clip-name"><span>${t.name}${len > 2 ? '-' + t.take : ''}</span><em>4H</em></div>
            </div>`;
        }).join('')}
    </div>`).join('');

// ruler
let marks = '';
for (let bar = 1; bar <= 17; bar++) marks += `<span>${bar}</span>`;
document.getElementById('ruler').innerHTML = marks;

// piano keys and the matching rows of the editor
const blackRows = [0, 4, 6, 8, 12, 14, 18, 20, 22];
const edgeRows = [2, 5, 7, 10, 13, 16, 19, 21, 24];
let keys = '';
let rows = '';
for (let r = 0; r < 25; r++) {
    const black = blackRows.includes(r) ? 'black' : '';
    keys += `<div class="key ${black} ${!black && edgeRows.includes(r) ? 'edge' : ''}"></div>`;
    rows += `<div class="roll-row ${black}"></div>`;
}
document.getElementById('keyRows').innerHTML = keys;
document.getElementById('rollRows').innerHTML = rows;

// notes: [start, length, row, colour, label], 27 units per bar
const notes = [
    [8, 15, 20, '#c00a16', ''],
    [22, 2, 19, '#2a1020', ''],
    [27, 2, 18, '#2a1020', ''],
    [35, 11, 17, '#c80c18', ''],
    [51, 21, 14, '#d80a14', ''],
    [78, 2, 11, '#3a0c30', ''],
    [104, 26, 7, '#b80c3c', 'G3'],
    [125, 8, 11, '#6a3090', 'E3'],
    [149, 27, 11, '#b80c44', 'E3'],
    [165, 8, 21, '#7c2870', 'G2'],
    [172, 18, 13, '#5c2296', 'D3'],
    [189, 24, 15, '#42209c', 'C3'],
    [225, 39, 18, '#6c1c86', 'A#2'],
    [225, 39, 20, '#6c1c86', 'G#2'],
    [226, 34, 15, '#de0a12', ''],
    [261, 4, 14, '#b00a28', ''],
    [281, 2, 12, '#d8405c', ''],
    [290, 2, 9, '#d8405c', ''],
    [302, 36, 9, '#5a1f8e', 'F3'],
    [339, 3, 11, '#4a50c8', ''],
    [347, 38, 15, '#ae104a', 'C3']
];
document.getElementById('notes').innerHTML = notes.map(([x, w, row, color, label]) =>
    `<div class="note" style="left: ${x}px; width: ${w}px; top: ${2 + row * 6}px; background: ${color}">${label}</div>`
).join('');

// controller lane: [x, height] curve sampled into narrow bars
const curveA = [[2, 15], [12, 20], [19, 23], [57, 23], [65, 20], [85, 20], [94, 23], [114, 23], [120, 17], [134, 15], [159, 15], [173, 19], [184, 23], [199, 23], [207, 17], [215, 12]];
const curveB = [[217, 11], [227, 19], [247, 20], [252, 23], [267, 23], [275, 18], [287, 15], [295, 15], [302, 20], [322, 23], [374, 23], [380, 16], [390, 12], [397, 14], [405, 23], [412, 23], [424, 13], [432, 2]];

function heightAt(curve, x) {
    for (let i = 1; i < curve.length; i++) {
        const [x0, y0] = curve[i - 1];
        const [x1, y1] = curve[i];
        if (x <= x1) return y0 + (y1 - y0) * (x - x0) / (x1 - x0);
    }
    return curve[curve.length - 1][1];
}

let ramp = '';
for (let x = 2; x < 216; x += 3) {
    const h = Math.round(heightAt(curveA, x));
    const t = Math.max(0, Math.min(1, (h - 14) / 9));
    const fill = `rgb(${Math.round(130 + 92 * t)}, ${Math.round(28 - 14 * t)}, ${Math.round(112 - 90 * t)})`;
    ramp += `<rect x="${x}" y="${24 - h}" width="3" height="${h}" fill="${fill}" stroke="none"/>`;
    ramp += `<rect x="${x}" y="${25 - h}" width="1" height="${h}" fill="#7a1840" opacity=".35" stroke="none"/>`;
}
for (let x = 217; x < 430; x += 4) {
    const h = Math.round(heightAt(curveB, x));
    ramp += `<rect x="${x + 0.5}" y="${24.5 - h}" width="4" height="${h}" fill="#b9b0ad" stroke="#6b6460"/>`;
}
document.getElementById('ramp').innerHTML = ramp;

// toolbox
const tools = ['arrow', 'range', 'split', 'glue', 'erase', 'zoom', 'mute', 'warp', 'draw', 'line', 'scrub', 'color'];
document.getElementById('tools').innerHTML = tools.map(t =>
    `<button class="${t === 'draw' ? 'active' : ''}" aria-label="${t}">${icon(t)}</button>`
).join('');

// marker numbers
let markers = '';
for (let m = 1; m <= 15; m++) markers += `<span>${m}</span>`;
document.getElementById('markers').innerHTML = markers;
```
